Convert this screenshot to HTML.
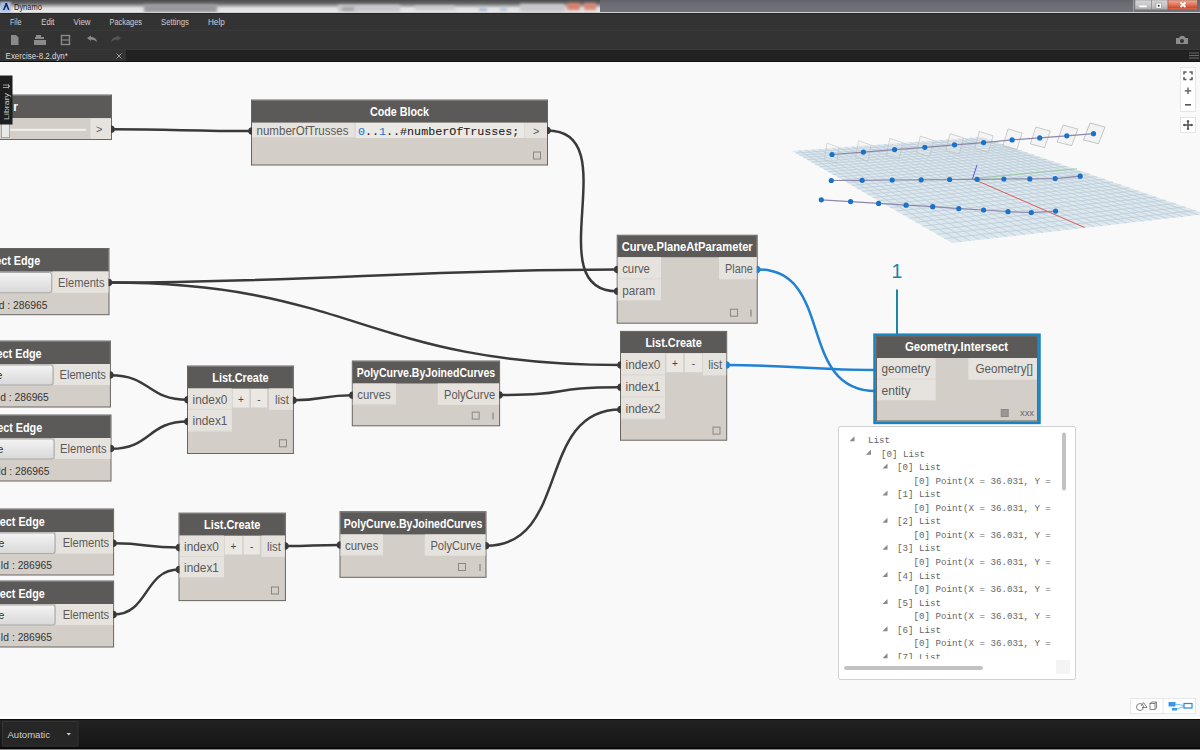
<!DOCTYPE html><html><head><meta charset="utf-8"><style>html,body{margin:0;padding:0;overflow:hidden;background:#f9f9f9}svg{display:block}</style></head><body>
<svg width="1200" height="750" viewBox="0 0 1200 750">
<defs>
<linearGradient id="tbL" x1="0" y1="0" x2="0" y2="1"><stop offset="0" stop-color="#5a5a5e"/><stop offset="0.3" stop-color="#9a9a9c"/><stop offset="0.55" stop-color="#e8e8e8"/><stop offset="1" stop-color="#f4f4f4"/></linearGradient>
<linearGradient id="tbR" x1="0" y1="0" x2="0" y2="1"><stop offset="0" stop-color="#626268"/><stop offset="0.3" stop-color="#6c6c74"/><stop offset="1" stop-color="#72727a"/></linearGradient>
<linearGradient id="tbH" x1="0" y1="0" x2="1" y2="0"><stop offset="0" stop-color="#fff" stop-opacity="0"/><stop offset="0.42" stop-color="#fff" stop-opacity="0"/><stop offset="0.5" stop-color="#6e6e76" stop-opacity="1"/><stop offset="1" stop-color="#6e6e76" stop-opacity="1"/></linearGradient>
<linearGradient id="btnG" x1="0" y1="0" x2="0" y2="1"><stop offset="0" stop-color="#f4f4f4"/><stop offset="1" stop-color="#d8d8d8"/></linearGradient>
<linearGradient id="closeG" x1="0" y1="0" x2="0" y2="1"><stop offset="0" stop-color="#eab0a0"/><stop offset="0.45" stop-color="#e07a60"/><stop offset="0.8" stop-color="#d04a2a"/><stop offset="1" stop-color="#e08870"/></linearGradient>
<linearGradient id="minG" x1="0" y1="0" x2="0" y2="1"><stop offset="0" stop-color="#d6d6d8"/><stop offset="0.6" stop-color="#c4c4c6"/><stop offset="1" stop-color="#a4a4a8"/></linearGradient>
</defs>
<rect x="0" y="62" width="1200" height="657" fill="#f9f9f9" />
<defs><filter id="bl2"><feGaussianBlur stdDeviation="0.8"/></filter><filter id="bl" x="-20%" y="-50%" width="140%" height="200%"><feGaussianBlur stdDeviation="1.6"/></filter><linearGradient id="tbV" x1="0" y1="0" x2="0" y2="1"><stop offset="0" stop-color="#4a4a4c"/><stop offset="0.25" stop-color="#666668"/><stop offset="0.45" stop-color="#a8a8aa"/><stop offset="0.62" stop-color="#dedede"/><stop offset="1" stop-color="#ececec"/></linearGradient></defs>
<rect x="0" y="0" width="600" height="13" fill="url(#tbV)" />
<g filter="url(#bl)">
<rect x="144" y="4.5" width="73" height="8" fill="#98989c" />
<rect x="338" y="5" width="62" height="7" fill="#c8c8cc" />
<rect x="342" y="7" width="12" height="4" fill="#a0a0a6" />
<rect x="415" y="6" width="40" height="4" fill="#c8c8c8" />
<rect x="479" y="8" width="8" height="3" fill="#a8b0d8" />
<rect x="500" y="8" width="7" height="3" fill="#b0bcdc" />
<rect x="520" y="4" width="45" height="8" fill="#c8c8cc" />
<rect x="567" y="3" width="13" height="7" fill="#d8806e" />
<rect x="584" y="3" width="12" height="7" fill="#d88676" />
</g>
<rect x="600" y="0" width="600" height="12.5" fill="url(#tbR)" />
<line x1="0" y1="12.5" x2="1200" y2="12.5" stroke="#cfcfd2" stroke-width="1"/>
<g filter="url(#bl2)">
<rect x="0" y="2" width="11" height="10" fill="#a8c0e8" />
</g>
<path d="M3,10 L5.5,3 L7,3 L9.5,10 L8,10 L6.3,6 L4.5,10 Z" fill="#1b2a5a"/>
<text x="14" y="9.5" font-family="'Liberation Sans', sans-serif" font-size="8.5" fill="#1a1a1a" font-weight="normal" text-anchor="start" textLength="27.8" lengthAdjust="spacingAndGlyphs" >Dynamo</text>
<line x1="1133.5" y1="0" x2="1133.5" y2="12" stroke="#9a9aa0" stroke-width="1"/>
<rect x="1135" y="0" width="16.7" height="9.7" fill="url(#minG)" stroke="#8a8a90" stroke-width="0.6" />
<rect x="1151.7" y="0" width="16.3" height="9.7" fill="url(#minG)" stroke="#8a8a90" stroke-width="0.6" />
<rect x="1168" y="0" width="29.3" height="9.7" fill="url(#closeG)" stroke="#a05040" stroke-width="0.6" />
<line x1="1140" y1="6.3" x2="1146" y2="6.3" stroke="#fff" stroke-width="1.8" stroke-linecap="round"/>
<rect x="1156" y="3" width="5.5" height="5.5" fill="#ffffff" stroke="#777" stroke-width="0.5" />
<circle cx="1158.7" cy="5.7" r="1" fill="#333"/>
<path d="M1180.5,2.5 L1185.5,7 M1185.5,2.5 L1180.5,7" stroke="#fff" stroke-width="1.9"/>
<rect x="0" y="13" width="1200" height="17" fill="#333333" />
<line x1="0" y1="13.5" x2="1200" y2="13.5" stroke="#262626" stroke-width="1"/>
<text x="10" y="24.5" font-family="'Liberation Sans', sans-serif" font-size="8.5" fill="#d0d0d0" font-weight="normal" text-anchor="start" textLength="11.5" lengthAdjust="spacingAndGlyphs" >File</text>
<text x="41.3" y="24.5" font-family="'Liberation Sans', sans-serif" font-size="8.5" fill="#d0d0d0" font-weight="normal" text-anchor="start" textLength="13.2" lengthAdjust="spacingAndGlyphs" >Edit</text>
<text x="73.5" y="24.5" font-family="'Liberation Sans', sans-serif" font-size="8.5" fill="#d0d0d0" font-weight="normal" text-anchor="start" textLength="17.0" lengthAdjust="spacingAndGlyphs" >View</text>
<text x="109.5" y="24.5" font-family="'Liberation Sans', sans-serif" font-size="8.5" fill="#d0d0d0" font-weight="normal" text-anchor="start" textLength="32.5" lengthAdjust="spacingAndGlyphs" >Packages</text>
<text x="161" y="24.5" font-family="'Liberation Sans', sans-serif" font-size="8.5" fill="#d0d0d0" font-weight="normal" text-anchor="start" textLength="28" lengthAdjust="spacingAndGlyphs" >Settings</text>
<text x="208" y="24.5" font-family="'Liberation Sans', sans-serif" font-size="8.5" fill="#d0d0d0" font-weight="normal" text-anchor="start" textLength="16.7" lengthAdjust="spacingAndGlyphs" >Help</text>
<rect x="0" y="30" width="1200" height="20" fill="#333333" />
<line x1="0" y1="30.3" x2="1200" y2="30.3" stroke="#3b3b3b" stroke-width="1"/>
<line x1="0" y1="49.5" x2="1200" y2="49.5" stroke="#393939" stroke-width="1"/>
<path d="M11,35 L16,35 L18.5,37.5 L18.5,45 L11,45 Z" fill="#8a8a8a"/>
<path d="M35,37 L44,37 L44,39 L35,39 Z M36,35 L41,35 L41,37 L36,37 Z M34,40 L46,40 L46,45 L34,45 Z" fill="#8a8a8a"/>
<rect x="61.5" y="35.5" width="8" height="9" fill="none" stroke="#8a8a8a" stroke-width="1.4" />
<line x1="61.5" y1="40" x2="69.5" y2="40" stroke="#8a8a8a" stroke-width="1.2"/>
<path d="M87,38 L91,35.5 L91,37 Q96,37 97,42 Q95,39.5 91,39.5 L91,41 Z" fill="#8a8a8a"/>
<path d="M121,38 L117,35.5 L117,37 Q112,37 111,42 Q113,39.5 117,39.5 L117,41 Z" fill="#555555"/>
<path d="M1176,38 L1179,38 L1180.5,36 L1184,36 L1185.5,38 L1188,38 L1188,44 L1176,44 Z" fill="#8c8c8c"/>
<circle cx="1182" cy="41" r="2" fill="#333"/>
<rect x="0" y="50" width="1200" height="12" fill="#222222" />
<rect x="0" y="50" width="126" height="12" fill="#333333" />
<text x="5.6" y="59" font-family="'Liberation Sans', sans-serif" font-size="8.3" fill="#d8d8d8" font-weight="normal" text-anchor="start" textLength="62.3" lengthAdjust="spacingAndGlyphs" >Exercise-8.2.dyn*</text>
<path d="M116.5,53.5 L121.5,58.5 M121.5,53.5 L116.5,58.5" stroke="#9a9a9a" stroke-width="1"/>
<line x1="1189" y1="53" x2="1199" y2="53" stroke="#6a6a6a" stroke-width="1"/>
<line x1="1189" y1="55.5" x2="1199" y2="55.5" stroke="#6a6a6a" stroke-width="1"/>
<line x1="1189" y1="58" x2="1199" y2="58" stroke="#6a6a6a" stroke-width="1"/>
<line x1="0" y1="61.5" x2="1200" y2="61.5" stroke="#111" stroke-width="1"/>
<polygon points="792,151 982,137 1206,214 952,243" fill="#dce7ee"/>
<path d="M798.79,150.5 L961.36,241.93 M795.68,153.11 L987.31,138.83 M805.55,150.0 L970.66,240.87 M799.43,155.27 L992.73,140.69 M812.27,149.51 L979.89,239.82 M803.27,157.48 L998.25,142.59 M818.96,149.01 L989.05,238.77 M807.19,159.74 L1003.89,144.53 M825.62,148.52 L998.14,237.73 M811.2,162.04 L1009.65,146.5 M832.25,148.03 L1007.17,236.7 M815.3,164.4 L1015.53,148.52 M838.84,147.55 L1016.14,235.68 M819.5,166.81 L1021.53,150.59 M845.4,147.07 L1025.04,234.66 M823.79,169.28 L1027.66,152.7 M851.93,146.58 L1033.88,233.65 M828.18,171.81 L1033.92,154.85 M858.42,146.11 L1042.66,232.65 M832.68,174.39 L1040.32,157.05 M864.89,145.63 L1051.37,231.65 M837.29,177.04 L1046.87,159.3 M871.32,145.16 L1060.02,230.67 M842.0,179.75 L1053.56,161.6 M877.72,144.68 L1068.61,229.69 M846.84,182.53 L1060.4,163.95 M884.09,144.21 L1077.15,228.71 M851.79,185.38 L1067.39,166.35 M890.43,143.75 L1085.62,227.74 M856.87,188.3 L1074.55,168.81 M896.74,143.28 L1094.03,226.78 M862.08,191.29 L1081.88,171.33 M903.02,142.82 L1102.39,225.83 M867.42,194.37 L1089.38,173.91 M909.27,142.36 L1110.69,224.88 M872.9,197.52 L1097.06,176.55 M915.49,141.9 L1118.93,223.94 M878.53,200.76 L1104.92,179.25 M921.68,141.44 L1127.12,223.01 M884.31,204.08 L1112.98,182.03 M927.84,140.99 L1135.25,222.08 M890.25,207.49 L1121.24,184.86 M933.97,140.54 L1143.32,221.16 M896.35,211.0 L1129.71,187.78 M940.08,140.09 L1151.34,220.24 M902.62,214.61 L1138.4,190.76 M946.15,139.64 L1159.31,219.33 M909.08,218.32 L1147.3,193.82 M952.2,139.2 L1167.22,218.43 M915.71,222.14 L1156.45,196.97 M958.21,138.75 L1175.08,217.53 M922.55,226.06 L1165.83,200.19 M964.2,138.31 L1182.89,216.64 M929.58,230.11 L1175.47,203.5 M970.16,137.87 L1190.64,215.75 M936.83,234.28 L1185.37,206.91 M976.09,137.44 L1198.35,214.87 M944.3,238.57 L1195.54,210.4" stroke="#b9cad6" stroke-width="0.7" fill="none"/>
<line x1="972.5" y1="178.7" x2="1084.5" y2="227.5" stroke="#e06060" stroke-width="1"/>
<line x1="972.5" y1="178.7" x2="1077" y2="168.8" stroke="#90c890" stroke-width="0.8"/>
<line x1="972.5" y1="178.7" x2="977" y2="165" stroke="#5a5ae0" stroke-width="1"/>
<polygon points="827.0,143.0 839.0,147.5 836.5,163.5 824.5,159.5" fill="#ececec" fill-opacity="0.15" stroke="#b8b8b8" stroke-width="0.8" stroke-opacity="0.60"/>
<polygon points="858.6,140.7 870.9,145.1 868.0,161.2 855.6,157.2" fill="#ececec" fill-opacity="0.19" stroke="#b8b8b8" stroke-width="0.8" stroke-opacity="0.64"/>
<polygon points="889.9,138.3 902.6,142.7 899.2,158.8 886.5,154.9" fill="#ececec" fill-opacity="0.23" stroke="#b8b8b8" stroke-width="0.8" stroke-opacity="0.69"/>
<polygon points="920.3,136.1 933.3,140.4 929.5,156.6 916.5,152.7" fill="#ececec" fill-opacity="0.27" stroke="#b8b8b8" stroke-width="0.8" stroke-opacity="0.73"/>
<polygon points="950.2,133.7 963.5,137.9 959.2,154.2 945.9,150.4" fill="#ececec" fill-opacity="0.31" stroke="#b8b8b8" stroke-width="0.8" stroke-opacity="0.78"/>
<polygon points="979.4,131.5 993.1,135.8 988.4,152.2 974.7,148.3" fill="#ececec" fill-opacity="0.34" stroke="#b8b8b8" stroke-width="0.8" stroke-opacity="0.82"/>
<polygon points="1008.1,128.9 1022.1,133.1 1016.9,149.6 1002.9,145.8" fill="#ececec" fill-opacity="0.38" stroke="#b8b8b8" stroke-width="0.8" stroke-opacity="0.87"/>
<polygon points="1035.9,127.0 1050.2,131.1 1044.6,147.7 1030.3,143.9" fill="#ececec" fill-opacity="0.42" stroke="#b8b8b8" stroke-width="0.8" stroke-opacity="0.91"/>
<polygon points="1063.1,125.0 1077.8,129.1 1071.7,145.7 1057.1,142.0" fill="#ececec" fill-opacity="0.46" stroke="#b8b8b8" stroke-width="0.8" stroke-opacity="0.96"/>
<polygon points="1090.0,123.0 1105.0,127.0 1098.5,143.7 1083.5,140.0" fill="#ececec" fill-opacity="0.50" stroke="#b8b8b8" stroke-width="0.8" stroke-opacity="1.00"/>
<polyline points="832,154.5 863.4,152.1 894.6,149.6 924.8,147.3 954.5,144.8 983.6,142.6 1012.1,139.9 1039.7,137.9 1066.8,135.8 1093.5,133.7" fill="none" stroke="#8e88a8" stroke-width="1.2"/>
<polyline points="831.3,180.5 862.1,180.3 892.2,180 921.2,179.8 949.6,179.5 977.1,179.3 1003.9,179 1029.8,178.9 1055.2,178.6 1080.2,176.2" fill="none" stroke="#8e88a8" stroke-width="1.2"/>
<polyline points="821.3,199.8 850.6,201.6 878.6,203.4 906.1,205.2 932.7,206.7 958.8,208.6 983.6,210 1008,211.7 1031.3,212.6 1055.6,211.1" fill="none" stroke="#8e88a8" stroke-width="1.2"/>
<circle cx="832" cy="154.5" r="2.6" fill="#1a72c8"/>
<circle cx="863.4" cy="152.1" r="2.6" fill="#1a72c8"/>
<circle cx="894.6" cy="149.6" r="2.6" fill="#1a72c8"/>
<circle cx="924.8" cy="147.3" r="2.6" fill="#1a72c8"/>
<circle cx="954.5" cy="144.8" r="2.6" fill="#1a72c8"/>
<circle cx="983.6" cy="142.6" r="2.6" fill="#1a72c8"/>
<circle cx="1012.1" cy="139.9" r="2.6" fill="#1a72c8"/>
<circle cx="1039.7" cy="137.9" r="2.6" fill="#1a72c8"/>
<circle cx="1066.8" cy="135.8" r="2.6" fill="#1a72c8"/>
<circle cx="1093.5" cy="133.7" r="2.6" fill="#1a72c8"/>
<circle cx="831.3" cy="180.5" r="2.6" fill="#1a72c8"/>
<circle cx="862.1" cy="180.3" r="2.6" fill="#1a72c8"/>
<circle cx="892.2" cy="180" r="2.6" fill="#1a72c8"/>
<circle cx="921.2" cy="179.8" r="2.6" fill="#1a72c8"/>
<circle cx="949.6" cy="179.5" r="2.6" fill="#1a72c8"/>
<circle cx="977.1" cy="179.3" r="2.6" fill="#1a72c8"/>
<circle cx="1003.9" cy="179" r="2.6" fill="#1a72c8"/>
<circle cx="1029.8" cy="178.9" r="2.6" fill="#1a72c8"/>
<circle cx="1055.2" cy="178.6" r="2.6" fill="#1a72c8"/>
<circle cx="1080.2" cy="176.2" r="2.6" fill="#1a72c8"/>
<circle cx="821.3" cy="199.8" r="2.6" fill="#1a72c8"/>
<circle cx="850.6" cy="201.6" r="2.6" fill="#1a72c8"/>
<circle cx="878.6" cy="203.4" r="2.6" fill="#1a72c8"/>
<circle cx="906.1" cy="205.2" r="2.6" fill="#1a72c8"/>
<circle cx="932.7" cy="206.7" r="2.6" fill="#1a72c8"/>
<circle cx="958.8" cy="208.6" r="2.6" fill="#1a72c8"/>
<circle cx="983.6" cy="210" r="2.6" fill="#1a72c8"/>
<circle cx="1008" cy="211.7" r="2.6" fill="#1a72c8"/>
<circle cx="1031.3" cy="212.6" r="2.6" fill="#1a72c8"/>
<circle cx="1055.6" cy="211.1" r="2.6" fill="#1a72c8"/>
<path d="M112,129.3 C172,129.3 191.5,131 251.5,131" fill="none" stroke="#3a3a3a" stroke-width="2.5"/>
<path d="M547.5,130.5 C627.5,130.5 537,291.2 617,291.2" fill="none" stroke="#3a3a3a" stroke-width="2.5"/>
<path d="M109,282.5 C309,282.5 417,269.6 617,269.6" fill="none" stroke="#3a3a3a" stroke-width="2.5"/>
<path d="M109,282.5 C354,282.5 365.5,365 620.5,365" fill="none" stroke="#3a3a3a" stroke-width="2.5"/>
<path d="M110.5,375.2 C150.5,375.2 147.5,399.8 187.5,399.8" fill="none" stroke="#3a3a3a" stroke-width="2.5"/>
<path d="M111,448.8 C151,448.8 147.5,421.5 187.5,421.5" fill="none" stroke="#3a3a3a" stroke-width="2.5"/>
<path d="M293.5,400.3 C323.5,400.3 322.3,395.3 352.3,395.3" fill="none" stroke="#3a3a3a" stroke-width="2.5"/>
<path d="M499.6,395 C574.6,395 545.5,387.3 620.5,387.3" fill="none" stroke="#3a3a3a" stroke-width="2.5"/>
<path d="M113.6,543.3 C148.6,543.3 144,547.6 179,547.6" fill="none" stroke="#3a3a3a" stroke-width="2.5"/>
<path d="M113.6,614.6 C148.6,614.6 144,569.6 179,569.6" fill="none" stroke="#3a3a3a" stroke-width="2.5"/>
<path d="M285.4,546 C315.4,546 310,545 340,545" fill="none" stroke="#3a3a3a" stroke-width="2.5"/>
<path d="M486,545.8 C571,545.8 535.5,409.5 620.5,409.5" fill="none" stroke="#3a3a3a" stroke-width="2.5"/>
<path d="M758,269.5 C835,269.5 796,391 876,391" fill="none" stroke="#2181d2" stroke-width="2.5"/>
<path d="M727,365 C787,365 816,370 876,370" fill="none" stroke="#2181d2" stroke-width="2.5"/>
<rect x="-60" y="95" width="171.5" height="44.5" fill="#d3cec8" stroke="#686562" stroke-width="1" />
<rect x="-59.5" y="95.5" width="170.5" height="22.5" fill="#5c5a58" />
<text x="18" y="111" font-family="'Liberation Sans', sans-serif" font-size="12" fill="#fff" font-weight="bold" text-anchor="end" >r</text>
<rect x="90.5" y="118.5" width="20.5" height="20.5" fill="#e6e3de" />
<text x="96" y="132.5" font-family="'Liberation Sans', sans-serif" font-size="11" fill="#5a5a5a" font-weight="normal" text-anchor="start" >&gt;</text>
<rect x="10" y="128.8" width="76" height="2" fill="#f2f0ed" />
<rect x="1.5" y="122.5" width="8" height="15" fill="#e8e8e8" stroke="#9a9a9a" stroke-width="0.8" />
<rect x="251.5" y="100" width="296.0" height="65" fill="#d3cec8" stroke="#686562" stroke-width="1" />
<rect x="252.0" y="100.5" width="295.0" height="22.0" fill="#5c5a58" />
<text x="370.0" y="116" font-family="'Liberation Sans', sans-serif" font-size="12" fill="#ffffff" font-weight="bold" text-anchor="start" textLength="59" lengthAdjust="spacingAndGlyphs" >Code Block</text>
<rect x="252.0" y="123" width="102.5" height="15" fill="#e6e3de" />
<line x1="252.0" y1="137.5" x2="354.5" y2="137.5" stroke="#d9d5cf" stroke-width="1"/>
<text x="256.5" y="135.1" font-family="'Liberation Sans', sans-serif" font-size="12" fill="#5a5a5a" font-weight="normal" text-anchor="start" textLength="92" lengthAdjust="spacingAndGlyphs" >numberOfTrusses</text>
<rect x="355.5" y="123" width="169" height="15" fill="#ebe9e5" />
<text x="358" y="134.5" font-family="Liberation Mono, monospace" font-size="11.7" fill="#1e1e1e" stroke="#1e1e1e" stroke-width="0.08"><tspan fill="#1f78d8" stroke="#1f78d8">0</tspan>..<tspan fill="#1f78d8" stroke="#1f78d8">1</tspan>..#numberOfTrusses;</text>
<rect x="525" y="123" width="22" height="15" fill="#e6e3de" />
<text x="533" y="134.5" font-family="'Liberation Sans', sans-serif" font-size="11" fill="#5a5a5a" font-weight="normal" text-anchor="start" >&gt;</text>
<rect x="533.5" y="152.0" width="7" height="7" fill="none" stroke="#8a8784" stroke-width="1" />
<rect x="617.2" y="235.2" width="140.0" height="88.0" fill="#d3cec8" stroke="#686562" stroke-width="1" />
<rect x="617.7" y="235.7" width="139.0" height="21.5" fill="#5c5a58" />
<text x="621.7" y="251.2" font-family="'Liberation Sans', sans-serif" font-size="12" fill="#ffffff" font-weight="bold" text-anchor="start" textLength="131" lengthAdjust="spacingAndGlyphs" >Curve.PlaneAtParameter</text>
<rect x="617.7" y="257.2" width="43.299999999999955" height="22.100000000000023" fill="#e6e3de" />
<line x1="617.7" y1="278.8" x2="661" y2="278.8" stroke="#d9d5cf" stroke-width="1"/>
<text x="622.2" y="272.85" font-family="'Liberation Sans', sans-serif" font-size="12" fill="#5a5a5a" font-weight="normal" text-anchor="start" textLength="27.7" lengthAdjust="spacingAndGlyphs" >curve</text>
<rect x="617.7" y="279.3" width="43.299999999999955" height="21.69999999999999" fill="#e6e3de" />
<line x1="617.7" y1="300.5" x2="661" y2="300.5" stroke="#d9d5cf" stroke-width="1"/>
<text x="622.2" y="294.75" font-family="'Liberation Sans', sans-serif" font-size="12" fill="#5a5a5a" font-weight="normal" text-anchor="start" textLength="33" lengthAdjust="spacingAndGlyphs" >param</text>
<rect x="719" y="257.2" width="37.700000000000045" height="22.100000000000023" fill="#e6e3de" />
<text x="725.0" y="272.85" font-family="'Liberation Sans', sans-serif" font-size="12" fill="#5a5a5a" font-weight="normal" text-anchor="start" textLength="27.7" lengthAdjust="spacingAndGlyphs" >Plane</text>
<rect x="730.5" y="309.2" width="7" height="7" fill="none" stroke="#8a8784" stroke-width="1" />
<line x1="751" y1="309.5" x2="751" y2="316.5" stroke="#7a7775" stroke-width="1"/>
<rect x="620.5" y="331.4" width="106.20000000000005" height="108.80000000000001" fill="#d3cec8" stroke="#686562" stroke-width="1" />
<rect x="621.0" y="331.9" width="105.20000000000005" height="21.100000000000023" fill="#5c5a58" />
<text x="645.4" y="347.4" font-family="'Liberation Sans', sans-serif" font-size="12" fill="#ffffff" font-weight="bold" text-anchor="start" textLength="56.4" lengthAdjust="spacingAndGlyphs" >List.Create</text>
<rect x="621.0" y="353" width="44.0" height="22.399999999999977" fill="#e6e3de" />
<line x1="621.0" y1="374.9" x2="665" y2="374.9" stroke="#d9d5cf" stroke-width="1"/>
<text x="625.5" y="368.8" font-family="'Liberation Sans', sans-serif" font-size="12" fill="#5a5a5a" font-weight="normal" text-anchor="start" textLength="34.9" lengthAdjust="spacingAndGlyphs" >index0</text>
<rect x="621.0" y="375.4" width="44.0" height="22.200000000000045" fill="#e6e3de" />
<line x1="621.0" y1="397.1" x2="665" y2="397.1" stroke="#d9d5cf" stroke-width="1"/>
<text x="625.5" y="391.1" font-family="'Liberation Sans', sans-serif" font-size="12" fill="#5a5a5a" font-weight="normal" text-anchor="start" textLength="34.9" lengthAdjust="spacingAndGlyphs" >index1</text>
<rect x="621.0" y="397.6" width="44.0" height="21.799999999999955" fill="#e6e3de" />
<line x1="621.0" y1="418.9" x2="665" y2="418.9" stroke="#d9d5cf" stroke-width="1"/>
<text x="625.5" y="413.1" font-family="'Liberation Sans', sans-serif" font-size="12" fill="#5a5a5a" font-weight="normal" text-anchor="start" textLength="34.9" lengthAdjust="spacingAndGlyphs" >index2</text>
<rect x="666.4" y="353.5" width="16.800000000000068" height="18.69999999999999" fill="#ebe8e4" />
<text x="674.8" y="367.15000000000003" font-family="'Liberation Sans', sans-serif" font-size="10" fill="#444" font-weight="normal" text-anchor="middle" >+</text>
<rect x="684.8" y="353.5" width="17.200000000000045" height="18.69999999999999" fill="#ebe8e4" />
<text x="693.4" y="367.15000000000003" font-family="'Liberation Sans', sans-serif" font-size="10" fill="#444" font-weight="normal" text-anchor="middle" >-</text>
<rect x="702.7" y="353" width="23.5" height="22.399999999999977" fill="#e6e3de" />
<text x="708.3" y="368.8" font-family="'Liberation Sans', sans-serif" font-size="12" fill="#5a5a5a" font-weight="normal" text-anchor="start" textLength="13.9" lengthAdjust="spacingAndGlyphs" >list</text>
<rect x="713.0" y="427.1" width="7" height="7" fill="none" stroke="#8a8784" stroke-width="1" />
<rect x="874.6" y="334.8" width="164.8" height="88" fill="none" stroke="#1985bf" stroke-width="2.7" />
<rect x="876.5" y="336.5" width="161.0" height="84.5" fill="#d3cec8" stroke="#686562" stroke-width="1" />
<rect x="877.0" y="337.0" width="160.0" height="21.0" fill="#5c5a58" />
<text x="904.9" y="351" font-family="'Liberation Sans', sans-serif" font-size="12" fill="#ffffff" font-weight="bold" text-anchor="start" textLength="103.2" lengthAdjust="spacingAndGlyphs" >Geometry.Intersect</text>
<rect x="877.0" y="358" width="58.60000000000002" height="21.600000000000023" fill="#e6e3de" />
<line x1="877.0" y1="379.1" x2="935.6" y2="379.1" stroke="#d9d5cf" stroke-width="1"/>
<text x="881.5" y="373.40000000000003" font-family="'Liberation Sans', sans-serif" font-size="12" fill="#5a5a5a" font-weight="normal" text-anchor="start" textLength="49" lengthAdjust="spacingAndGlyphs" >geometry</text>
<rect x="877.0" y="379.6" width="58.60000000000002" height="21.399999999999977" fill="#e6e3de" />
<line x1="877.0" y1="400.5" x2="935.6" y2="400.5" stroke="#d9d5cf" stroke-width="1"/>
<text x="881.5" y="394.90000000000003" font-family="'Liberation Sans', sans-serif" font-size="12" fill="#5a5a5a" font-weight="normal" text-anchor="start" textLength="29" lengthAdjust="spacingAndGlyphs" >entity</text>
<rect x="968.4" y="358" width="68.60000000000002" height="21.600000000000023" fill="#e6e3de" />
<text x="975.4" y="373.40000000000003" font-family="'Liberation Sans', sans-serif" font-size="12" fill="#5a5a5a" font-weight="normal" text-anchor="start" textLength="57.6" lengthAdjust="spacingAndGlyphs" >Geometry[]</text>
<rect x="1001.2" y="409.5" width="7" height="7" fill="#9a9794" stroke="#8a8784" stroke-width="1" />
<text x="1020" y="416" font-family="'Liberation Sans', sans-serif" font-size="9" fill="#6a6a6a" font-weight="normal" text-anchor="start" textLength="14" lengthAdjust="spacingAndGlyphs" >xxx</text>
<rect x="187.5" y="366" width="105.89999999999998" height="87.5" fill="#d3cec8" stroke="#686562" stroke-width="1" />
<rect x="188.0" y="366.5" width="104.89999999999998" height="22.0" fill="#5c5a58" />
<text x="212.25" y="382" font-family="'Liberation Sans', sans-serif" font-size="12" fill="#ffffff" font-weight="bold" text-anchor="start" textLength="56.4" lengthAdjust="spacingAndGlyphs" >List.Create</text>
<rect x="188.0" y="388.5" width="43.80000000000001" height="21.30000000000001" fill="#e6e3de" />
<line x1="188.0" y1="409.3" x2="231.8" y2="409.3" stroke="#d9d5cf" stroke-width="1"/>
<text x="192.5" y="403.75" font-family="'Liberation Sans', sans-serif" font-size="12" fill="#5a5a5a" font-weight="normal" text-anchor="start" textLength="34.9" lengthAdjust="spacingAndGlyphs" >index0</text>
<rect x="188.0" y="409.8" width="43.80000000000001" height="21.899999999999977" fill="#e6e3de" />
<line x1="188.0" y1="431.2" x2="231.8" y2="431.2" stroke="#d9d5cf" stroke-width="1"/>
<text x="192.5" y="425.35" font-family="'Liberation Sans', sans-serif" font-size="12" fill="#5a5a5a" font-weight="normal" text-anchor="start" textLength="34.9" lengthAdjust="spacingAndGlyphs" >index1</text>
<rect x="232.7" y="389" width="16.600000000000023" height="18.5" fill="#ebe8e4" />
<text x="241.0" y="402.55" font-family="'Liberation Sans', sans-serif" font-size="10" fill="#444" font-weight="normal" text-anchor="middle" >+</text>
<rect x="251" y="389" width="16" height="18.5" fill="#ebe8e4" />
<text x="259.0" y="402.55" font-family="'Liberation Sans', sans-serif" font-size="10" fill="#444" font-weight="normal" text-anchor="middle" >-</text>
<rect x="269.2" y="388.5" width="23.69999999999999" height="21.30000000000001" fill="#e6e3de" />
<text x="275.0" y="403.75" font-family="'Liberation Sans', sans-serif" font-size="12" fill="#5a5a5a" font-weight="normal" text-anchor="start" textLength="13.9" lengthAdjust="spacingAndGlyphs" >list</text>
<rect x="279.5" y="439.8" width="7" height="7" fill="none" stroke="#8a8784" stroke-width="1" />
<rect x="352.3" y="361" width="147.3" height="64.80000000000001" fill="#d3cec8" stroke="#686562" stroke-width="1" />
<rect x="352.8" y="361.5" width="146.3" height="22.0" fill="#5c5a58" />
<text x="356.7" y="377" font-family="'Liberation Sans', sans-serif" font-size="12" fill="#ffffff" font-weight="bold" text-anchor="start" textLength="138.5" lengthAdjust="spacingAndGlyphs" >PolyCurve.ByJoinedCurves</text>
<rect x="352.8" y="383.5" width="43.19999999999999" height="21.30000000000001" fill="#e6e3de" />
<line x1="352.8" y1="404.3" x2="396" y2="404.3" stroke="#d9d5cf" stroke-width="1"/>
<text x="357.3" y="398.75" font-family="'Liberation Sans', sans-serif" font-size="12" fill="#5a5a5a" font-weight="normal" text-anchor="start" textLength="33.3" lengthAdjust="spacingAndGlyphs" >curves</text>
<rect x="437.8" y="383.5" width="61.30000000000001" height="21.30000000000001" fill="#e6e3de" />
<text x="444.1" y="398.75" font-family="'Liberation Sans', sans-serif" font-size="12" fill="#5a5a5a" font-weight="normal" text-anchor="start" textLength="51" lengthAdjust="spacingAndGlyphs" >PolyCurve</text>
<rect x="472.2" y="412.1" width="7" height="7" fill="none" stroke="#8a8784" stroke-width="1" />
<line x1="493" y1="412.5" x2="493" y2="419.5" stroke="#7a7775" stroke-width="1"/>
<rect x="179" y="513.1" width="106.39999999999998" height="87.5" fill="#d3cec8" stroke="#686562" stroke-width="1" />
<rect x="179.5" y="513.6" width="105.39999999999998" height="22.0" fill="#5c5a58" />
<text x="204.0" y="529.1" font-family="'Liberation Sans', sans-serif" font-size="12" fill="#ffffff" font-weight="bold" text-anchor="start" textLength="56.4" lengthAdjust="spacingAndGlyphs" >List.Create</text>
<rect x="179.5" y="535.6" width="44.5" height="21.299999999999955" fill="#e6e3de" />
<line x1="179.5" y1="556.4" x2="224" y2="556.4" stroke="#d9d5cf" stroke-width="1"/>
<text x="184" y="550.85" font-family="'Liberation Sans', sans-serif" font-size="12" fill="#5a5a5a" font-weight="normal" text-anchor="start" textLength="34.9" lengthAdjust="spacingAndGlyphs" >index0</text>
<rect x="179.5" y="556.9" width="44.5" height="21.100000000000023" fill="#e6e3de" />
<line x1="179.5" y1="577.5" x2="224" y2="577.5" stroke="#d9d5cf" stroke-width="1"/>
<text x="184" y="572.0500000000001" font-family="'Liberation Sans', sans-serif" font-size="12" fill="#5a5a5a" font-weight="normal" text-anchor="start" textLength="34.9" lengthAdjust="spacingAndGlyphs" >index1</text>
<rect x="224.7" y="536" width="17.5" height="18.5" fill="#ebe8e4" />
<text x="233.45" y="549.55" font-family="'Liberation Sans', sans-serif" font-size="10" fill="#444" font-weight="normal" text-anchor="middle" >+</text>
<rect x="243.7" y="536" width="16.0" height="18.5" fill="#ebe8e4" />
<text x="251.7" y="549.55" font-family="'Liberation Sans', sans-serif" font-size="10" fill="#444" font-weight="normal" text-anchor="middle" >-</text>
<rect x="261.5" y="535.6" width="23.399999999999977" height="21.299999999999955" fill="#e6e3de" />
<text x="267.0" y="550.85" font-family="'Liberation Sans', sans-serif" font-size="12" fill="#5a5a5a" font-weight="normal" text-anchor="start" textLength="13.9" lengthAdjust="spacingAndGlyphs" >list</text>
<rect x="271.5" y="587.0" width="7" height="7" fill="none" stroke="#8a8784" stroke-width="1" />
<rect x="340" y="511.7" width="146" height="65.59999999999997" fill="#d3cec8" stroke="#686562" stroke-width="1" />
<rect x="340.5" y="512.2" width="145" height="22.19999999999999" fill="#5c5a58" />
<text x="343.75" y="527.7" font-family="'Liberation Sans', sans-serif" font-size="12" fill="#ffffff" font-weight="bold" text-anchor="start" textLength="138.5" lengthAdjust="spacingAndGlyphs" >PolyCurve.ByJoinedCurves</text>
<rect x="340.5" y="534.4" width="42.5" height="21.300000000000068" fill="#e6e3de" />
<line x1="340.5" y1="555.2" x2="383" y2="555.2" stroke="#d9d5cf" stroke-width="1"/>
<text x="345" y="549.65" font-family="'Liberation Sans', sans-serif" font-size="12" fill="#5a5a5a" font-weight="normal" text-anchor="start" textLength="33.3" lengthAdjust="spacingAndGlyphs" >curves</text>
<rect x="424.8" y="534.4" width="60.69999999999999" height="21.300000000000068" fill="#e6e3de" />
<text x="430.5" y="549.65" font-family="'Liberation Sans', sans-serif" font-size="12" fill="#5a5a5a" font-weight="normal" text-anchor="start" textLength="51" lengthAdjust="spacingAndGlyphs" >PolyCurve</text>
<rect x="458.5" y="563.5" width="7" height="7" fill="none" stroke="#8a8784" stroke-width="1" />
<line x1="480" y1="564.0" x2="480" y2="571.0" stroke="#7a7775" stroke-width="1"/>
<rect x="-80" y="248.5" width="189" height="66.19999999999999" fill="#d3cec8" stroke="#686562" stroke-width="1" />
<rect x="-79.5" y="249.0" width="188" height="22.5" fill="#5c5a58" />
<text x="-21.0" y="265.0" font-family="'Liberation Sans', sans-serif" font-size="12" fill="#fff" font-weight="bold" text-anchor="start" textLength="61.2" lengthAdjust="spacingAndGlyphs" >Select Edge</text>
<rect x="-10" y="272.5" width="61.7" height="20.30000000000001" rx="2.5" fill="url(#btnG)" stroke="#a8a8a8" stroke-width="1"/>
<rect x="52.7" y="271.5" width="55.8" height="21.30000000000001" fill="#e6e3de" />
<text x="58.1" y="286.75" font-family="'Liberation Sans', sans-serif" font-size="12" fill="#5a5a5a" font-weight="normal" text-anchor="start" textLength="46.4" lengthAdjust="spacingAndGlyphs" >Elements</text>
<text x="47.4" y="309.09999999999997" font-family="'Liberation Sans', sans-serif" font-size="10.3" fill="#333" font-weight="normal" text-anchor="end" >Id : 286965</text>
<rect x="-80" y="341" width="190.4" height="66" fill="#d3cec8" stroke="#686562" stroke-width="1" />
<rect x="-79.5" y="341.5" width="189.4" height="22.5" fill="#5c5a58" />
<text x="-19.6" y="357.5" font-family="'Liberation Sans', sans-serif" font-size="12" fill="#fff" font-weight="bold" text-anchor="start" textLength="61.2" lengthAdjust="spacingAndGlyphs" >Select Edge</text>
<rect x="-10" y="365" width="63" height="20" rx="2.5" fill="url(#btnG)" stroke="#a8a8a8" stroke-width="1"/>
<text x="2.5" y="378.5" font-family="'Liberation Sans', sans-serif" font-size="11" fill="#333" font-weight="normal" text-anchor="end" >Change</text>
<rect x="54" y="364" width="55.900000000000006" height="21" fill="#e6e3de" />
<text x="59.5" y="379.1" font-family="'Liberation Sans', sans-serif" font-size="12" fill="#5a5a5a" font-weight="normal" text-anchor="start" textLength="46.4" lengthAdjust="spacingAndGlyphs" >Elements</text>
<text x="48.800000000000004" y="401.4" font-family="'Liberation Sans', sans-serif" font-size="10.3" fill="#333" font-weight="normal" text-anchor="end" >Id : 286965</text>
<rect x="-80" y="415" width="191" height="66" fill="#d3cec8" stroke="#686562" stroke-width="1" />
<rect x="-79.5" y="415.5" width="190" height="22.5" fill="#5c5a58" />
<text x="-19.0" y="431.5" font-family="'Liberation Sans', sans-serif" font-size="12" fill="#fff" font-weight="bold" text-anchor="start" textLength="61.2" lengthAdjust="spacingAndGlyphs" >Select Edge</text>
<rect x="-10" y="439" width="64" height="20" rx="2.5" fill="url(#btnG)" stroke="#a8a8a8" stroke-width="1"/>
<text x="3.5" y="452.5" font-family="'Liberation Sans', sans-serif" font-size="11" fill="#333" font-weight="normal" text-anchor="end" >Change</text>
<rect x="55" y="438" width="55.5" height="21" fill="#e6e3de" />
<text x="60.1" y="453.1" font-family="'Liberation Sans', sans-serif" font-size="12" fill="#5a5a5a" font-weight="normal" text-anchor="start" textLength="46.4" lengthAdjust="spacingAndGlyphs" >Elements</text>
<text x="49.4" y="475.4" font-family="'Liberation Sans', sans-serif" font-size="10.3" fill="#333" font-weight="normal" text-anchor="end" >Id : 286965</text>
<rect x="-80" y="509" width="193.6" height="66" fill="#d3cec8" stroke="#686562" stroke-width="1" />
<rect x="-79.5" y="509.5" width="192.6" height="22.5" fill="#5c5a58" />
<text x="-16.4" y="525.5" font-family="'Liberation Sans', sans-serif" font-size="12" fill="#fff" font-weight="bold" text-anchor="start" textLength="61.2" lengthAdjust="spacingAndGlyphs" >Select Edge</text>
<rect x="-10" y="533" width="65" height="20.5" rx="2.5" fill="url(#btnG)" stroke="#a8a8a8" stroke-width="1"/>
<text x="4.5" y="546.75" font-family="'Liberation Sans', sans-serif" font-size="11" fill="#333" font-weight="normal" text-anchor="end" >Change</text>
<rect x="56" y="532" width="57.099999999999994" height="21.5" fill="#e6e3de" />
<text x="62.7" y="547.35" font-family="'Liberation Sans', sans-serif" font-size="12" fill="#5a5a5a" font-weight="normal" text-anchor="start" textLength="46.4" lengthAdjust="spacingAndGlyphs" >Elements</text>
<text x="51.99999999999999" y="569.4" font-family="'Liberation Sans', sans-serif" font-size="10.3" fill="#333" font-weight="normal" text-anchor="end" >Id : 286965</text>
<rect x="-80" y="581" width="193.6" height="66" fill="#d3cec8" stroke="#686562" stroke-width="1" />
<rect x="-79.5" y="581.5" width="192.6" height="22.5" fill="#5c5a58" />
<text x="-16.4" y="597.5" font-family="'Liberation Sans', sans-serif" font-size="12" fill="#fff" font-weight="bold" text-anchor="start" textLength="61.2" lengthAdjust="spacingAndGlyphs" >Select Edge</text>
<rect x="-10" y="605" width="65" height="20" rx="2.5" fill="url(#btnG)" stroke="#a8a8a8" stroke-width="1"/>
<text x="4.5" y="618.5" font-family="'Liberation Sans', sans-serif" font-size="11" fill="#333" font-weight="normal" text-anchor="end" >Change</text>
<rect x="56" y="604" width="57.099999999999994" height="21" fill="#e6e3de" />
<text x="62.7" y="619.1" font-family="'Liberation Sans', sans-serif" font-size="12" fill="#5a5a5a" font-weight="normal" text-anchor="start" textLength="46.4" lengthAdjust="spacingAndGlyphs" >Elements</text>
<text x="51.99999999999999" y="641.4" font-family="'Liberation Sans', sans-serif" font-size="10.3" fill="#333" font-weight="normal" text-anchor="end" >Id : 286965</text>
<path d="M252.0,127.2 A3.8,3.8 0 0 0 252.0,134.8 Z" fill="#3a3a3a"/>
<path d="M617.7,265.8 A3.8,3.8 0 0 0 617.7,273.40000000000003 Z" fill="#3a3a3a"/>
<path d="M617.7,287.4 A3.8,3.8 0 0 0 617.7,295.0 Z" fill="#3a3a3a"/>
<path d="M621.0,361.2 A3.8,3.8 0 0 0 621.0,368.8 Z" fill="#3a3a3a"/>
<path d="M621.0,383.5 A3.8,3.8 0 0 0 621.0,391.1 Z" fill="#3a3a3a"/>
<path d="M621.0,405.7 A3.8,3.8 0 0 0 621.0,413.3 Z" fill="#3a3a3a"/>
<path d="M188.0,396.0 A3.8,3.8 0 0 0 188.0,403.6 Z" fill="#3a3a3a"/>
<path d="M188.0,417.7 A3.8,3.8 0 0 0 188.0,425.3 Z" fill="#3a3a3a"/>
<path d="M352.8,391.5 A3.8,3.8 0 0 0 352.8,399.1 Z" fill="#3a3a3a"/>
<path d="M179.5,543.8000000000001 A3.8,3.8 0 0 0 179.5,551.4 Z" fill="#3a3a3a"/>
<path d="M179.5,565.8000000000001 A3.8,3.8 0 0 0 179.5,573.4 Z" fill="#3a3a3a"/>
<path d="M340.5,541.2 A3.8,3.8 0 0 0 340.5,548.8 Z" fill="#3a3a3a"/>
<path d="M111.0,125.50000000000001 A3.8,3.8 0 0 1 111.0,133.10000000000002 Z" fill="#3a3a3a"/>
<path d="M547.0,126.7 A3.8,3.8 0 0 1 547.0,134.3 Z" fill="#3a3a3a"/>
<path d="M108.5,278.7 A3.8,3.8 0 0 1 108.5,286.3 Z" fill="#3a3a3a"/>
<path d="M109.9,371.2 A3.8,3.8 0 0 1 109.9,378.8 Z" fill="#3a3a3a"/>
<path d="M110.5,444.7 A3.8,3.8 0 0 1 110.5,452.3 Z" fill="#3a3a3a"/>
<path d="M113.1,539.5 A3.8,3.8 0 0 1 113.1,547.0999999999999 Z" fill="#3a3a3a"/>
<path d="M113.1,610.8000000000001 A3.8,3.8 0 0 1 113.1,618.4 Z" fill="#3a3a3a"/>
<path d="M292.9,396.5 A3.8,3.8 0 0 1 292.9,404.1 Z" fill="#3a3a3a"/>
<path d="M499.1,391.2 A3.8,3.8 0 0 1 499.1,398.8 Z" fill="#3a3a3a"/>
<path d="M284.9,542.2 A3.8,3.8 0 0 1 284.9,549.8 Z" fill="#3a3a3a"/>
<path d="M485.5,542.0 A3.8,3.8 0 0 1 485.5,549.5999999999999 Z" fill="#3a3a3a"/>
<path d="M756.7,265.7 A3.8,3.8 0 0 1 756.7,273.3 Z" fill="#2181d2"/>
<path d="M726.2,361.2 A3.8,3.8 0 0 1 726.2,368.8 Z" fill="#2181d2"/>
<text x="897" y="278.3" font-family="'Liberation Sans', sans-serif" font-size="19.5" fill="#1886a8" font-weight="normal" text-anchor="middle" >1</text>
<line x1="897" y1="289.5" x2="897" y2="334" stroke="#1b87a8" stroke-width="2"/>
<rect x="838.5" y="426.5" width="237" height="253" fill="#ffffff" stroke="#d0d0d0" stroke-width="1" rx="2" />
<clipPath id="pvclip"><rect x="839" y="427" width="236" height="232"/></clipPath><g clip-path="url(#pvclip)">
<path d="M854.5,436.3 L854.5,441.3 L849.5,441.3 Z" fill="#888"/>
<text x="868" y="443.0" font-family="'Liberation Mono', monospace" font-size="9.17" fill="#666" font-weight="normal" text-anchor="start" >List</text>
<path d="M871,449.86 L871,454.86 L866,454.86 Z" fill="#888"/>
<text x="881" y="456.56" font-family="'Liberation Mono', monospace" font-size="9.17" fill="#666" font-weight="normal" text-anchor="start" >[0] List</text>
<path d="M887.5,463.42 L887.5,468.42 L882.5,468.42 Z" fill="#888"/>
<text x="897" y="470.12" font-family="'Liberation Mono', monospace" font-size="9.17" fill="#666" font-weight="normal" text-anchor="start" >[0] List</text>
<text x="913.5" y="483.68" font-family="'Liberation Mono', monospace" font-size="9.17" fill="#666" font-weight="normal" text-anchor="start" >[0] Point(X = 36.031, Y =</text>
<path d="M887.5,490.54 L887.5,495.54 L882.5,495.54 Z" fill="#888"/>
<text x="897" y="497.24" font-family="'Liberation Mono', monospace" font-size="9.17" fill="#666" font-weight="normal" text-anchor="start" >[1] List</text>
<text x="913.5" y="510.8" font-family="'Liberation Mono', monospace" font-size="9.17" fill="#666" font-weight="normal" text-anchor="start" >[0] Point(X = 36.031, Y =</text>
<path d="M887.5,517.66 L887.5,522.66 L882.5,522.66 Z" fill="#888"/>
<text x="897" y="524.36" font-family="'Liberation Mono', monospace" font-size="9.17" fill="#666" font-weight="normal" text-anchor="start" >[2] List</text>
<text x="913.5" y="537.9200000000001" font-family="'Liberation Mono', monospace" font-size="9.17" fill="#666" font-weight="normal" text-anchor="start" >[0] Point(X = 36.031, Y =</text>
<path d="M887.5,544.78 L887.5,549.78 L882.5,549.78 Z" fill="#888"/>
<text x="897" y="551.48" font-family="'Liberation Mono', monospace" font-size="9.17" fill="#666" font-weight="normal" text-anchor="start" >[3] List</text>
<text x="913.5" y="565.0400000000001" font-family="'Liberation Mono', monospace" font-size="9.17" fill="#666" font-weight="normal" text-anchor="start" >[0] Point(X = 36.031, Y =</text>
<path d="M887.5,571.9 L887.5,576.9 L882.5,576.9 Z" fill="#888"/>
<text x="897" y="578.6" font-family="'Liberation Mono', monospace" font-size="9.17" fill="#666" font-weight="normal" text-anchor="start" >[4] List</text>
<text x="913.5" y="592.1600000000001" font-family="'Liberation Mono', monospace" font-size="9.17" fill="#666" font-weight="normal" text-anchor="start" >[0] Point(X = 36.031, Y =</text>
<path d="M887.5,599.02 L887.5,604.02 L882.5,604.02 Z" fill="#888"/>
<text x="897" y="605.72" font-family="'Liberation Mono', monospace" font-size="9.17" fill="#666" font-weight="normal" text-anchor="start" >[5] List</text>
<text x="913.5" y="619.2800000000001" font-family="'Liberation Mono', monospace" font-size="9.17" fill="#666" font-weight="normal" text-anchor="start" >[0] Point(X = 36.031, Y =</text>
<path d="M887.5,626.14 L887.5,631.14 L882.5,631.14 Z" fill="#888"/>
<text x="897" y="632.84" font-family="'Liberation Mono', monospace" font-size="9.17" fill="#666" font-weight="normal" text-anchor="start" >[6] List</text>
<text x="913.5" y="646.4000000000001" font-family="'Liberation Mono', monospace" font-size="9.17" fill="#666" font-weight="normal" text-anchor="start" >[0] Point(X = 36.031, Y =</text>
<path d="M887.5,653.26 L887.5,658.26 L882.5,658.26 Z" fill="#888"/>
<text x="897" y="659.96" font-family="'Liberation Mono', monospace" font-size="9.17" fill="#666" font-weight="normal" text-anchor="start" >[7] List</text>
</g>
<rect x="1062" y="432.5" width="4" height="58" fill="#c2c2c2" rx="2" />
<rect x="844" y="666" width="139" height="4" fill="#c2c2c2" rx="2" />
<rect x="1056" y="660" width="14" height="14" fill="#f4f4f4" />
<rect x="0" y="75.5" width="12.5" height="49" fill="#1e1e1e" />
<path d="M3,85 L8,85 M3,87.5 L8,87.5" stroke="#aaa" stroke-width="0.9"/><path d="M8,83.5 L10,86.2 L8,89 Z" fill="#aaa"/>
<text x="0" y="0" transform="translate(9.3,120) rotate(-90)" font-family="Liberation Sans, sans-serif" font-size="8" fill="#c8c8c8" textLength="27" lengthAdjust="spacingAndGlyphs">Library</text>
<rect x="1180.5" y="67.5" width="15" height="44" fill="#ffffff" stroke="#e6e6e6" stroke-width="1" />
<path d="M1184,74.5 L1184,72 L1186.5,72 M1189.5,72 L1192,72 L1192,74.5 M1192,77 L1192,79.5 L1189.5,79.5 M1186.5,79.5 L1184,79.5 L1184,77" fill="none" stroke="#5a5a5a" stroke-width="1.5"/>
<path d="M1188,87.5 L1188,94 M1184.8,90.8 L1191.2,90.8" stroke="#555" stroke-width="1.3"/>
<path d="M1185,104.8 L1191,104.8" stroke="#555" stroke-width="1.6"/>
<rect x="1180.5" y="117.5" width="15" height="15" fill="#ffffff" stroke="#e6e6e6" stroke-width="1" />
<path d="M1188,121.5 L1188,128.5 M1184.5,125 L1191.5,125" stroke="#555" stroke-width="1.5"/><circle cx="1188" cy="121.3" r="1.2" fill="#555"/><circle cx="1188" cy="128.7" r="1.2" fill="#555"/><circle cx="1184.3" cy="125" r="1.2" fill="#555"/><circle cx="1191.7" cy="125" r="1.2" fill="#555"/>
<rect x="1130.5" y="698.5" width="65" height="15" fill="#ffffff" stroke="#e8e8e8" stroke-width="1" />
<line x1="1163" y1="699" x2="1163" y2="713" stroke="#e8e8e8"/>
<circle cx="1140" cy="707" r="3.5" fill="none" stroke="#666" stroke-width="0.8"/><path d="M1141,706 L1143.5,702.5 L1147,707.5 L1142,707.5" fill="none" stroke="#666" stroke-width="0.8"/><rect x="1150" y="703.5" width="5" height="6" fill="none" stroke="#666" stroke-width="0.8"/><path d="M1150,703.5 L1151.5,702 L1156.5,702 L1156.5,708 L1155,709.5 M1155,703.5 L1156.5,702" fill="none" stroke="#666" stroke-width="0.8"/>
<rect x="1169" y="702.5" width="6" height="3.5" fill="#3a9ae8" stroke="#2a8ae0" stroke-width="0.8"/><rect x="1172" y="708" width="5" height="2.5" fill="#3a9ae8"/><rect x="1184" y="703.5" width="8" height="4.5" fill="#fff" stroke="#2a8ae0" stroke-width="1.2"/><path d="M1175,704 L1184,705.5 M1177,709 L1184,706.5" stroke="#3a9ae8" stroke-width="0.7"/>
<defs><linearGradient id="bbG" x1="0" y1="0" x2="0" y2="1"><stop offset="0" stop-color="#222222"/><stop offset="1" stop-color="#141414"/></linearGradient></defs>
<line x1="0" y1="717.5" x2="1200" y2="717.5" stroke="#ffffff" stroke-width="1"/>
<rect x="0" y="719" width="1200" height="31" fill="url(#bbG)" />
<line x1="0" y1="719.5" x2="1200" y2="719.5" stroke="#0e0e0e" stroke-width="1"/>
<line x1="0" y1="748.3" x2="1200" y2="748.3" stroke="#000" stroke-width="1"/>
<rect x="0" y="749" width="1200" height="1" fill="#8a8a8a" />
<rect x="2.5" y="721.5" width="75.5" height="24.5" fill="#262626" stroke="#333" stroke-width="1" />
<text x="7.5" y="738" font-family="'Liberation Sans', sans-serif" font-size="9.5" fill="#d0d0d0" font-weight="normal" text-anchor="start" textLength="42.5" lengthAdjust="spacingAndGlyphs" >Automatic</text>
<path d="M66.5,733 L71,733 L68.75,735.5 Z" fill="#cccccc"/>
</svg></body></html>
